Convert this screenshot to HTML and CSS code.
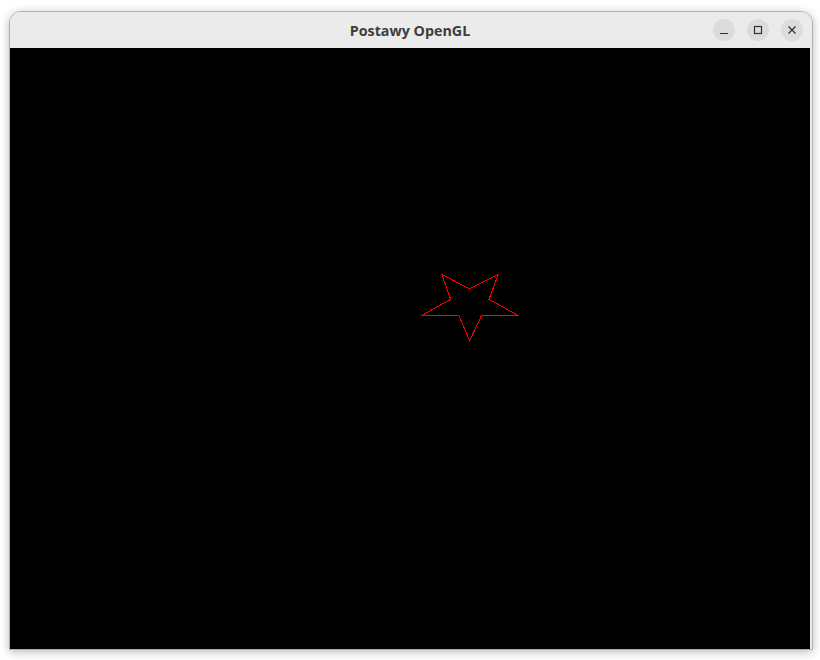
FILE: index.html
```html
<!DOCTYPE html>
<html>
<head>
<meta charset="utf-8">
<link rel="stylesheet" href="styles.css">
</head>
<body>
<div class="window">
  <div class="titlebar">
    <div class="title">Postawy OpenGL</div>
    <div class="controls">
      <div class="btn"><svg width="22" height="22" viewBox="0 0 22 22"><path d="M7 14.5h8" stroke="#333" stroke-width="1.2"/></svg></div>
      <div class="btn"><svg width="22" height="22" viewBox="0 0 22 22"><rect x="7.5" y="7.5" width="7" height="7" fill="none" stroke="#333" stroke-width="1.2"/></svg></div>
      <div class="btn"><svg width="22" height="22" viewBox="0 0 22 22"><path d="M7.5 7.5l7 7M14.5 7.5l-7 7" stroke="#333" stroke-width="1.3"/></svg></div>
    </div>
  </div>
  <div class="canvas">
    <svg class="scene" width="800" height="601" viewBox="0 0 800 601">
      <polygon points="431.7,226.3 459.3,240.8 488.3,226.3 479,251.3 507.3,267 471.7,267 459.7,292.7 448.7,267 412.7,267 440.7,251.3" fill="none" stroke="#ff0000" stroke-width="1" shape-rendering="crispEdges"/>
    </svg>
  </div>
</div>
</body>
</html>
```
FILE: styles.css
```css
html, body {
  margin: 0;
  padding: 0;
  background: #ffffff;
  width: 820px;
  height: 660px;
  overflow: hidden;
}
body {
  padding: 11px 0 0 9px;
  box-sizing: border-box;
}
.window {
  width: 802px;
  border: 1px solid #b0b0b0;
  border-radius: 12px 12px 0 0;
  background: #ebebeb;
  box-shadow: 0 2px 10px rgba(0, 0, 0, 0.28);
  overflow: hidden;
}
.titlebar {
  height: 36px;
  position: relative;
  display: flex;
  align-items: center;
  justify-content: center;
  background: #ebebeb;
}
.title {
  font-family: "Open Sans", "Noto Sans", sans-serif;
  font-weight: 700;
  font-size: 14.3px;
  color: #3d3d3d;
  padding-right: 2px;
}
.controls {
  position: absolute;
  right: 9px;
  top: 7px;
  display: flex;
  gap: 12px;
}
.btn {
  width: 22px;
  height: 22px;
  border-radius: 50%;
  background: #dcdcdc;
  display: flex;
}
.canvas {
  width: 800px;
  height: 601px;
  background: #000;
}
.scene {
  display: block;
}
```
